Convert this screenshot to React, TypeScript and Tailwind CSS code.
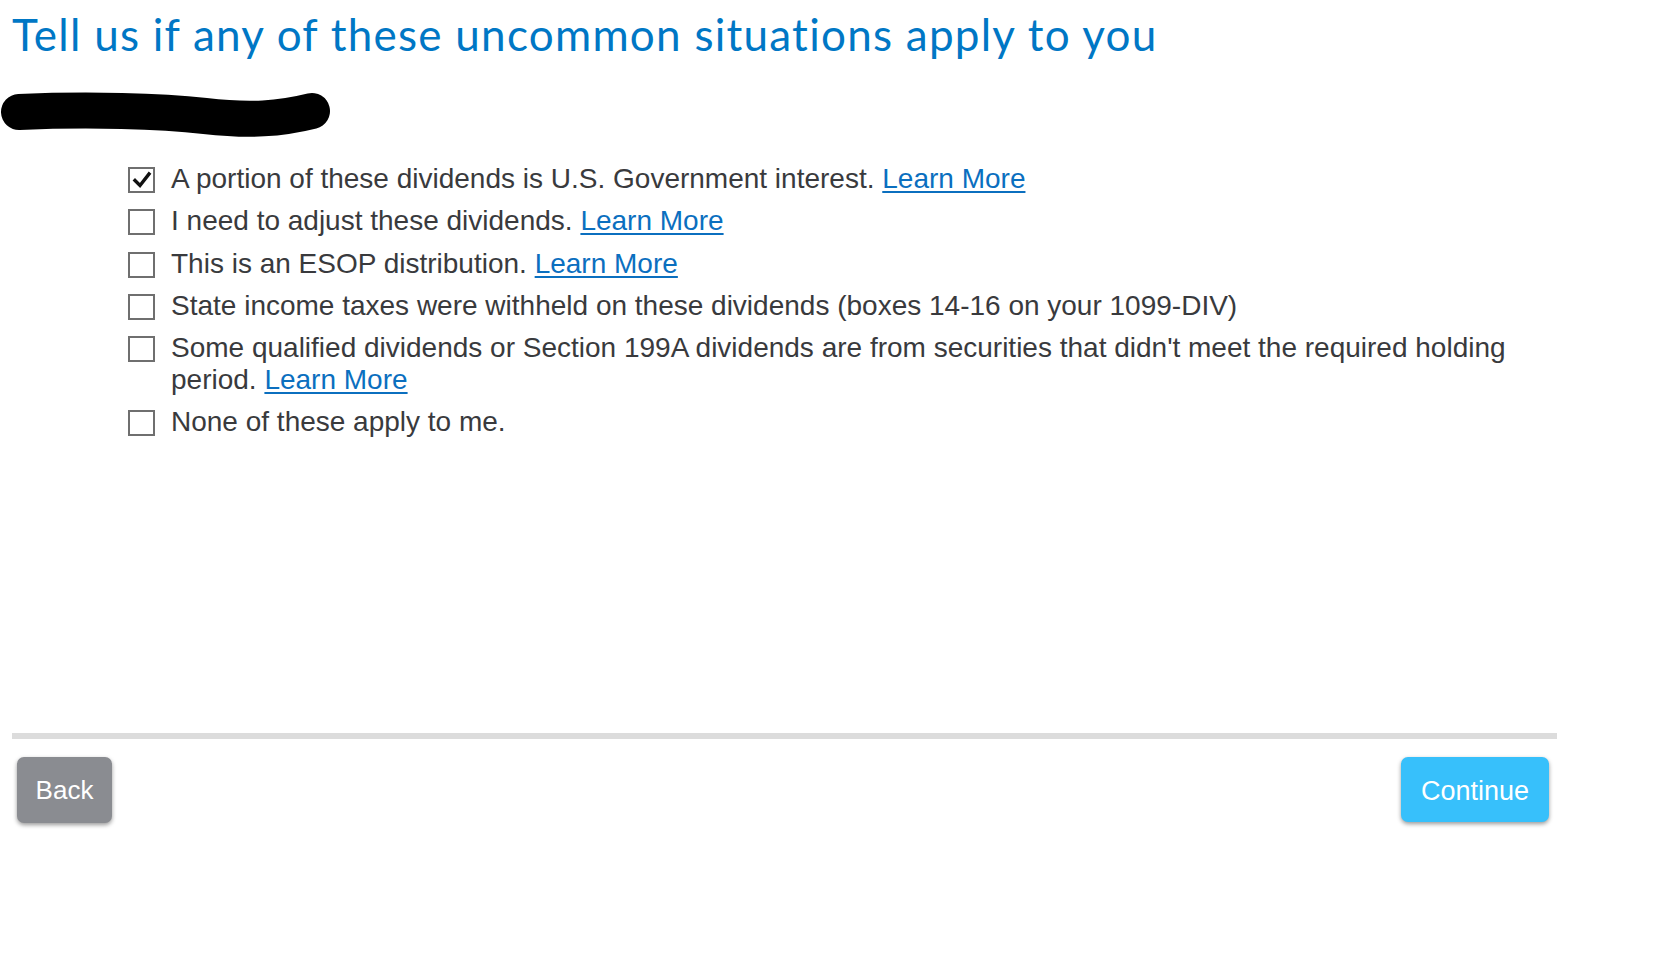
import React from 'react';

interface Situation {
  text: string;
  learnMore: boolean;
  checked: boolean;
}

const situations: Situation[] = [
  { text: 'A portion of these dividends is U.S. Government interest.', learnMore: true, checked: true },
  { text: 'I need to adjust these dividends.', learnMore: true, checked: false },
  { text: 'This is an ESOP distribution.', learnMore: true, checked: false },
  { text: 'State income taxes were withheld on these dividends (boxes 14-16 on your 1099-DIV)', learnMore: false, checked: false },
  {
    text: "Some qualified dividends or Section 199A dividends are from securities that didn't meet the required holding period.",
    learnMore: true,
    checked: false,
  },
  { text: 'None of these apply to me.', learnMore: false, checked: false },
];

const Checkbox: React.FC<{ checked: boolean }> = ({ checked }) => (
  <div className="w-[27px] h-[26px] shrink-0 mt-[4px] border-2 border-[#6f6f6f] bg-white flex items-center justify-center">
    {checked && (
      <svg width="20" height="18" viewBox="0 0 20 18">
        <polyline points="3,9.5 8,14.5 17,3" fill="none" stroke="#111" strokeWidth="3.4" strokeLinecap="square" />
      </svg>
    )}
  </div>
);

const App: React.FC = () => {
  return (
    <div className="w-[1653px] h-[964px] bg-white font-['Liberation_Sans',Arial,sans-serif]">
      <div className="h-[733px] flex flex-col">
        <h1 className="pl-[12px] pt-[8px] font-['Lato',sans-serif] text-[44px] leading-[52px] text-[#0077c5] font-normal tracking-[1.25px]">
          Tell us if any of these uncommon situations apply to you
        </h1>

        {/* redacted subtitle */}
        <svg className="mt-[29px] block" width="332" height="48" viewBox="0 0 332 48">
          <path
            d="M19 23 C 90 20, 160 22, 205 27 S 280 30, 312 22"
            fill="none"
            stroke="#000"
            strokeWidth="36"
            strokeLinecap="round"
          />
        </svg>

        <ul className="ml-[128px] mt-[26px] w-[1412px] flex flex-col gap-[10.3px] text-[28px] leading-[32px] text-[#393a3d]">
          {situations.map((s, i) => (
            <li key={i} className="flex items-start gap-[16px]">
              <Checkbox checked={s.checked} />
              <span className="flex-1">
                {s.text}
                {s.learnMore && (
                  <>
                    {' '}
                    <a href="#" className="text-[#0b6fbf] underline underline-offset-[3px]">
                      Learn More
                    </a>
                  </>
                )}
              </span>
            </li>
          ))}
        </ul>
      </div>

      <div className="ml-[12px] w-[1545px] h-[6px] bg-[#dcdcdc]" />

      <div className="ml-[17px] w-[1532px] mt-[18px] flex justify-between">
        <button className="w-[95px] h-[66px] rounded-[7px] bg-[#8a8c91] text-white text-[26px] shadow-[0_2px_4px_rgba(0,0,0,0.4)]">
          Back
        </button>
        <button className="w-[148px] h-[65px] pt-[3px] rounded-[7px] bg-[#37c0fb] text-white text-[27px] shadow-[0_2px_4px_rgba(0,0,0,0.4)]">
          Continue
        </button>
      </div>
    </div>
  );
};

export default App;
